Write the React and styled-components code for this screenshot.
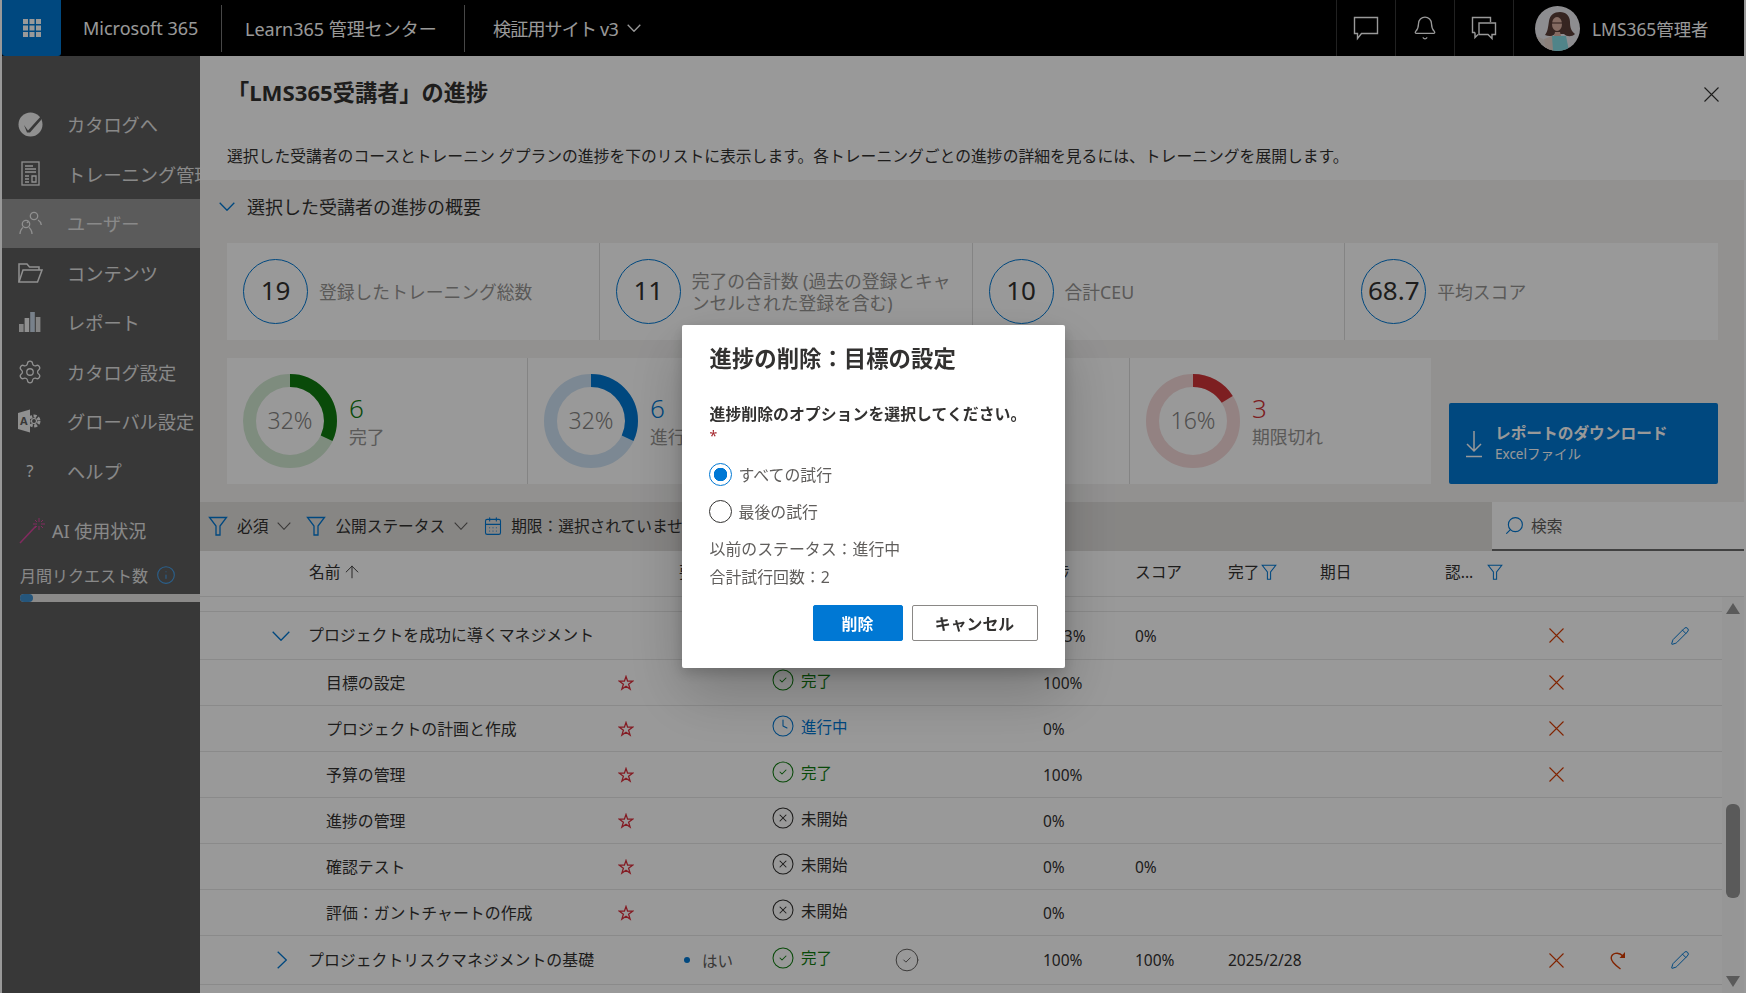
import React from 'react';
import styled, { createGlobalStyle } from 'styled-components';
import { Bell, CalendarDays, Search, Pencil, CircleCheck, Clock, CircleX, Settings, Info, ArrowUp } from 'lucide-react';

const GlobalStyle = createGlobalStyle`
  html, body {
    margin: 0;
    padding: 0;
    height: 100%;
    overflow: hidden;
    background: #fff;
    font-family: "Noto Sans", "Noto Sans CJK JP", sans-serif;
    color: #333;
  }
  * { box-sizing: border-box; }
`;

const AppFrame = styled.div`
  width: 1742px;
  height: 993px;
  margin: 0 2px;
  display: flex;
  flex-direction: column;
  overflow: hidden;
`;

/* top bar */
const TopBar = styled.header`
  height: 56px;
  flex: none;
  display: flex;
  align-items: stretch;
  background: #000;
  color: #fff;
  font-size: 18px;
`;

const Waffle = styled.div`
  width: 59px;
  background: #0078d4;
  border-radius: 0 0 3px 3px;
  display: flex;
  align-items: center;
  justify-content: center;
`;

const TopSection = styled.div`
  display: flex;
  align-items: center;
  align-self: center;
  gap: ${p => p.$gap || 0}px;
  height: 47px;
  width: ${p => p.$width}px;
  padding-left: ${p => p.$pad}px;
  border-right: ${p => (p.$plain ? 'none' : '1px solid #777')};
  white-space: nowrap;
`;

const SiteName = styled.span`
  letter-spacing: -0.8px;
`;

const TopRight = styled.div`
  margin-left: auto;
  display: flex;
  align-items: stretch;
`;

const TopIcon = styled.div`
  width: 59px;
  border-left: 1px solid #383838;
  display: flex;
  align-items: center;
  justify-content: center;
`;

const Profile = styled.div`
  width: 231px;
  border-left: 1px solid #383838;
  padding-left: 21px;
  display: flex;
  align-items: center;
  gap: 12px;
  font-size: 17.4px;
`;

const Body = styled.div`
  flex: 1;
  display: flex;
  min-height: 0;
`;

/* left nav */
const Sidebar = styled.nav`
  width: 198px;
  flex: none;
  background: #5e5e5e;
  overflow: hidden;
  padding-top: 43.5px;
  color: #e4e4e4;
`;

const NavItem = styled.div`
  height: 49.5px;
  display: flex;
  align-items: center;
  white-space: nowrap;
  font-size: 18.2px;
  background: ${p => (p.$active ? '#989898' : 'transparent')};
`;

const NavIcon = styled.span`
  width: 65px;
  flex: none;
  display: flex;
  justify-content: center;
  padding-right: 9px;
  color: #f0f0f0;
  font-size: 16px;
`;

const AiRow = styled.div`
  margin-top: 21px;
  padding-left: 16px;
  height: 26px;
  display: flex;
  align-items: center;
  gap: 6px;
  font-size: 18px;
  white-space: nowrap;
`;

const QuotaLabel = styled.div`
  margin-top: 21px;
  padding-left: 18px;
  height: 22px;
  display: flex;
  align-items: center;
  gap: 8px;
  font-size: 16px;
  white-space: nowrap;
`;

const QuotaTrack = styled.div`
  margin: 8px 0 0 18px;
  height: 8px;
  width: 200px;
  background: #e8e6e4;
  border-radius: 4px 0 0 4px;
`;

const QuotaFill = styled.div`
  height: 100%;
  background: #3f8fcf;
  border-radius: 4px;
`;

/* main panel */
const Panel = styled.main`
  flex: 1;
  min-width: 0;
  display: flex;
  flex-direction: column;
  background: #fff;
`;

const PanelHead = styled.div`
  height: 124px;
  flex: none;
  padding: 22px 0 0 27px;
  position: relative;
`;

const PanelTitle = styled.h1`
  margin: 0;
  font-size: 22.2px;
  line-height: 30px;
  font-weight: 700;
  color: #323130;
`;

const PanelDesc = styled.p`
  margin: 37px 0 0;
  font-size: 15.8px;
  line-height: 22px;
  color: #323130;
  white-space: nowrap;
`;

const CloseBtn = styled.span`
  position: absolute;
  top: 31px;
  right: 25px;
  display: flex;
  color: #323130;
`;

const Summary = styled.section`
  flex: none;
  height: 322px;
  background: #f3f2f1;
  padding: 15px 26px 0 27px;
`;

const SummaryHead = styled.div`
  height: 22px;
  display: flex;
  align-items: center;
  gap: 12px;
  margin-left: -8px;
  font-size: 18px;
  color: #323130;
`;

const StatRow = styled.div`
  margin-top: 26px;
  height: 97px;
  display: grid;
  grid-template-columns: repeat(4, 1fr);
  background: #fff;
`;

const StatCard = styled.div`
  display: flex;
  align-items: center;
  gap: 11px;
  padding-left: 16px;
  border-left: ${p => (p.$first ? 'none' : '1px solid #dcdcdc')};
  margin-left: ${p => (p.$first ? 0 : -1)}px;
`;

const StatCircle = styled.div`
  width: 65px;
  height: 65px;
  flex: none;
  border-radius: 50%;
  border: 1px solid #0078d4;
  display: flex;
  align-items: center;
  justify-content: center;
  padding-bottom: 4px;
  font-size: 26px;
  color: #323130;
`;

const StatLabel = styled.div`
  font-size: 17.8px;
  line-height: 22px;
  color: #979593;
  width: 268px;
`;

const DonutRow = styled.div`
  margin-top: 18px;
  display: flex;
  gap: 18px;
  align-items: flex-end;
`;

const DonutCards = styled.div`
  width: 1204px;
  height: 126px;
  flex: none;
  display: grid;
  grid-template-columns: repeat(4, 1fr);
  background: #fff;
`;

const DonutCard = styled.div`
  display: flex;
  align-items: center;
  gap: 12px;
  padding-left: 16px;
  border-left: ${p => (p.$first ? 'none' : '1px solid #dcdcdc')};
  margin-left: ${p => (p.$first ? 0 : -1)}px;
`;

const DonutLabelText = styled.text`
  font-size: 23px;
  fill: #868482;
  text-anchor: middle;
  font-family: "Noto Sans", sans-serif;
  font-weight: 300;
`;

const DonutCount = styled.div`
  font-size: 26px;
  line-height: 32px;
  font-weight: 300;
  color: ${p => p.$color};
`;

const DonutName = styled.div`
  font-size: 17.8px;
  line-height: 26px;
  color: #979593;
`;

const DownloadBtn = styled.div`
  flex: 1;
  height: 81px;
  background: #0078d4;
  border-radius: 2px;
  color: #fff;
  display: flex;
  align-items: center;
  padding-left: 15px;
  gap: 11px;
`;

const DownloadText = styled.div`
  padding-bottom: 4px;
`;

const DownloadTitle = styled.div`
  font-size: 15.7px;
  font-weight: 700;
  line-height: 24px;
`;

const DownloadSub = styled.div`
  font-size: 13.5px;
  line-height: 18px;
`;

/* filter bar */
const FilterBar = styled.div`
  flex: none;
  height: 49px;
  background: #e1dfdd;
  display: flex;
  align-items: center;
  gap: 15px;
  padding-left: 8px;
  padding-bottom: 2px;
  font-size: 15.7px;
  color: #323130;
  white-space: nowrap;
  position: relative;
`;

const FilterItem = styled.div`
  display: flex;
  align-items: center;
  gap: ${p => p.$gap || 9}px;
`;

const SearchBox = styled.div`
  position: absolute;
  right: 0;
  top: 0;
  bottom: 0;
  width: 252px;
  background: #fff;
  border-bottom: 2px solid #6d6d6d;
  display: flex;
  align-items: center;
  gap: 6px;
  padding-left: 12px;
  color: #605e5c;
`;

const MirrorIcon = styled.span`
  display: flex;
  transform: scaleX(-1);
  color: #0078d4;
`;

/* table */
const COLUMNS = '109px 370px 95px 120px 149px 92px 93px 92px 125px 95px 61px 63px 1fr';

const HeaderRow = styled.div`
  flex: none;
  height: 46px;
  display: grid;
  grid-template-columns: ${COLUMNS};
  align-items: center;
  font-size: 15.7px;
  color: #323130;
  border-bottom: 1px solid #e6e6e6;
  white-space: nowrap;
  padding-bottom: 4px;
`;

const HeadCell = styled.div`
  grid-column: ${p => p.$col};
  display: flex;
  align-items: center;
  gap: ${p => p.$gap || 2}px;
  margin-left: ${p => p.$shift || 0}px;
`;

const TableWrap = styled.div`
  flex: 1;
  min-height: 0;
  display: flex;
  overflow: hidden;
`;

const Rows = styled.div`
  flex: 1;
  min-width: 0;
`;

const Spacer = styled.div`
  height: 15px;
  border-bottom: 1px solid #e6e6e6;
`;

const Row = styled.div`
  height: ${p => p.$height}px;
  display: grid;
  grid-template-columns: ${COLUMNS};
  align-items: center;
  border-bottom: 1px solid #e6e6e6;
  font-size: 15.5px;
  color: #323130;
  white-space: nowrap;
`;

const Expander = styled.div`
  grid-column: 1;
  display: flex;
  justify-content: flex-end;
  padding-right: ${p => p.$pad || 19}px;
  color: #0078d4;
`;

const NameCell = styled.div`
  grid-column: 2;
  display: flex;
  align-items: center;
  margin-left: -1px;
  padding-left: ${p => (p.$child ? 18 : 0)}px;
  padding-bottom: ${p => (p.$child ? 0 : 2)}px;
`;

const NameText = styled.span`
  width: ${p => (p.$child ? '292px' : 'auto')};
  font-size: 15.9px;
`;

const RequiredCell = styled.div`
  grid-column: 3;
  display: flex;
  align-items: center;
  gap: 12px;
  padding-left: 5px;
  color: #605e5c;
`;

const Dot = styled.span`
  width: 6px;
  height: 6px;
  border-radius: 50%;
  background: #0078d4;
`;

const StatusCell = styled.div`
  grid-column: 4;
  display: flex;
  align-items: center;
  gap: 6px;
  margin-left: -3px;
  padding-bottom: 5px;
  color: ${p => p.$color};
`;

const VerifyCell = styled.div`
  grid-column: 5;
  display: flex;
  padding-bottom: 1px;
  color: #605e5c;
`;

const PctCell = styled.div`
  grid-column: 6;
  padding-left: ${p => p.$pad || 0}px;
`;

const TextCell = styled.div`
  grid-column: ${p => p.$col};
`;

const ActionCell = styled.div`
  grid-column: ${p => p.$col};
  display: flex;
  padding-left: ${p => p.$pad || 9}px;
  color: ${p => p.$color};
`;

const ScrollRail = styled.div`
  width: 22px;
  flex: none;
  display: flex;
  flex-direction: column;
  align-items: center;
  padding: 6px 0 0 0;
  background: #fafafa;
`;

const ScrollArrow = styled.span`
  width: 0;
  height: 0;
  border-left: 7px solid transparent;
  border-right: 7px solid transparent;
  border-bottom: ${p => (p.$down ? '0' : '11px solid #969696')};
  border-top: ${p => (p.$down ? '11px solid #969696' : '0')};
`;

const ScrollThumb = styled.div`
  width: 14px;
  height: 94px;
  margin: 190px 0 78px;
  border-radius: 6px;
  background: #969696;
`;

/* modal */
const Overlay = styled.div`
  position: fixed;
  inset: 0;
  background: rgba(0, 0, 0, 0.4);
  display: flex;
  align-items: center;
  justify-content: center;
`;

const Dialog = styled.div`
  width: 383px;
  height: 343px;
  background: #fff;
  border-radius: 2px;
  padding: 19px 27px 27px 28px;
  box-shadow: 0 25px 58px rgba(0, 0, 0, 0.22), 0 5px 14px rgba(0, 0, 0, 0.18);
  color: #323130;
`;

const DialogTitle = styled.h2`
  margin: 0;
  font-size: 22.4px;
  line-height: 30px;
  font-weight: 700;
  white-space: nowrap;
`;

const FieldLabel = styled.div`
  margin-top: 29px;
  font-size: 15.9px;
  line-height: 22px;
  font-weight: 700;
  white-space: nowrap;
`;

const RequiredMark = styled.div`
  height: 16px;
  margin-top: 2px;
  line-height: 18px;
  font-size: 14px;
  color: #a4262c;
`;

const RadioRow = styled.label`
  height: 23px;
  margin-top: ${p => p.$top}px;
  margin-left: -1px;
  display: flex;
  align-items: center;
  gap: 7px;
  font-size: 15.9px;
  color: #605e5c;
`;

const Radio = styled.input`
  appearance: none;
  margin: 0;
  width: 23px;
  height: 23px;
  border-radius: 50%;
  border: 1px solid ${p => (p.checked ? '#0078d4' : '#323130')};
  background: ${p => (p.checked ? 'radial-gradient(circle, #0078d4 0 6.5px, #fff 7px)' : '#fff')};
`;

const InfoLine = styled.div`
  margin-top: ${p => p.$top}px;
  font-size: 15.9px;
  line-height: 22px;
  color: #605e5c;
`;

const DialogActions = styled.div`
  margin-top: 17px;
  display: flex;
  justify-content: flex-end;
  gap: 9px;
`;

const Button = styled.button`
  width: ${p => p.$width}px;
  height: 36px;
  padding: 0;
  border-radius: 2px;
  font: inherit;
  font-size: 15.9px;
  font-weight: 700;
  cursor: pointer;
  color: ${p => (p.$primary ? '#fff' : '#323130')};
  background: ${p => (p.$primary ? '#0078d4' : '#fff')};
  border: 1px solid ${p => (p.$primary ? '#0078d4' : '#8a8886')};
`;

const WaffleIcon = () => (
  <svg width="18" height="18" viewBox="0 0 18 18" fill="#fff">
    {[0, 6.5, 13].map(y => [0, 6.5, 13].map(x => <rect key={`${x}-${y}`} x={x} y={y} width="5" height="5" />))}
  </svg>
);

const ChatIcon = () => (
  <svg width="26" height="26" viewBox="0 0 26 26" fill="none" stroke="#fff" strokeWidth="1.4">
    <path d="M1.500 2.500h23v16H8.500l-4 5v-5h-3z" />
  </svg>
);

const CommentsIcon = () => (
  <svg width="26" height="26" viewBox="0 0 26 26" fill="none" stroke="#fff" strokeWidth="1.4">
    <path d="M4 17.500H1.500v-15h18V7" />
    <path d="M8 8h16.500v11.500H21v4l-4-4H8z" />
    <path d="M4 17.500v5l3-3" />
  </svg>
);

const Avatar = () => (
  <svg width="45" height="45" viewBox="0 0 45 45">
    <defs><clipPath id="av"><circle cx="22.500" cy="22.500" r="22.500" /></clipPath></defs>
    <g clipPath="url(#av)">
      <rect width="45" height="45" fill="#ecebf0" />
      <path d="M0 30c8 2 12 4 16 15H0z" fill="#e4dcd8" />
      <path d="M25 6c-6 0-10 3-11 9-1 6-1 10-4 14 4 2 8 1 10-1h9c3 3 8 3 11 0-4-3-5-7-5-12 0-6-4-10-10-10z" fill="#5a3e38" />
      <ellipse cx="22" cy="18" rx="5" ry="7" fill="#dcb3a3" />
      <path d="M17 17h10" stroke="#4a2f2a" strokeWidth="1.200" />
      <path d="M20 26h5l1 4h-7z" fill="#dcb3a3" />
      <path d="M16 45l1-15h14l3 15z" fill="#86dce4" />
      <path d="M9 33l8-3 1 15H11z" fill="#e8d6cc" />
    </g>
  </svg>
);

const Chevron = ({ width, height = width / 2, dir = 'down', color = 'currentColor', stroke = 1.300 }) => {
  const path = dir === 'down'
    ? `M0.700 0.700L${width / 2} ${height - 0.700}L${width - 0.700} 0.700`
    : `M0.700 0.700L${width - 0.700} ${height / 2}L0.700 ${height - 0.700}`;
  return (
    <svg width={width} height={height} viewBox={`0 0 ${width} ${height}`} fill="none" stroke={color} strokeWidth={stroke}>
      <path d={path} />
    </svg>
  );
};

const CrossIcon = ({ size = 15, color = 'currentColor', stroke = 1.100 }) => (
  <svg width={size} height={size} viewBox={`0 0 ${size} ${size}`} fill="none" stroke={color} strokeWidth={stroke}>
    <path d={`M0.500 0.500L${size - 0.500} ${size - 0.500}M${size - 0.500} 0.500L0.500 ${size - 0.500}`} />
  </svg>
);

const StarIcon = () => (
  <svg width="16" height="16" viewBox="0 0 16 16" fill="none" stroke="#dc2f3c" strokeWidth="1.300">
    <path d="M8 1.500l1.600 4.700h5l-4 3 1.500 4.900L8 11.200l-4.100 2.900 1.500-4.900-4-3h5z" />
  </svg>
);

const CatalogIcon = () => (
  <svg width="25" height="25" viewBox="0 0 25 25">
    <circle cx="12.500" cy="12.500" r="12" fill="#f0f0f0" />
    <path d="M6 13l4 5.500L24 3l-1 5-11 12.500h-3z" fill="#5e5e5e" />
  </svg>
);

const TrainingIcon = () => (
  <svg width="19" height="25" viewBox="0 0 19 25" fill="none" stroke="#f0f0f0" strokeWidth="1.300">
    <rect x="1" y="1" width="17" height="23" />
    <path d="M4 5h8M4 8h11M4 11h11M4 15h4M4 18h4M4 21h4M11 15h4v6h-4z" />
  </svg>
);

const UsersIcon = () => (
  <svg width="24" height="24" viewBox="0 0 24 24" fill="none" stroke="#f0f0f0" strokeWidth="1.300">
    <circle cx="16" cy="5" r="3.700" />
    <path d="M11 10.500c-.5 0-1.500.5-2 1.500M20 9c2 1 3 3 3.300 5" />
    <circle cx="8" cy="13" r="3.700" />
    <path d="M2 23c0-3 2-6 3-6.500M14 23c0-3-2-6-3-6.500" />
  </svg>
);

const FolderIcon = () => (
  <svg width="25" height="22" viewBox="0 0 25 22" fill="none" stroke="#f0f0f0" strokeWidth="1.500">
    <path d="M1 20V2h8l2.500 3H21v3" />
    <path d="M1 20l4-12h19l-4.500 12z" />
  </svg>
);

const ReportIcon = () => (
  <svg width="22" height="22" viewBox="0 0 22 22">
    <rect x="0" y="13" width="4.600" height="8" fill="#dcdcdc" />
    <rect x="5.600" y="7" width="4.600" height="14" fill="#f0f0f0" />
    <rect x="11.200" y="1" width="4.600" height="20" fill="#c8d8e8" />
    <rect x="16.800" y="6" width="4.600" height="15" fill="#dcdcdc" />
  </svg>
);

const GlobalIcon = () => (
  <svg width="26" height="26" viewBox="0 0 26 26">
    <path d="M1 5l12-3.500v23L1 21z" fill="#f0f0f0" />
    <text x="3" y="17" fontSize="11" fontWeight="700" fill="#5e5e5e">A</text>
    <circle cx="17" cy="13" r="5" fill="none" stroke="#f0f0f0" strokeWidth="3" strokeDasharray="3 1.500" />
    <circle cx="17" cy="13" r="2.500" fill="none" stroke="#f0f0f0" strokeWidth="1.200" />
  </svg>
);

const WandIcon = () => (
  <svg width="28" height="28" viewBox="0 0 28 28" fill="none" stroke="#d9479f" strokeWidth="1.300">
    <path d="M2 27L18 10" strokeWidth="1.500" />
    <path d="M21 2v4M21 10v4M15 8h4M23 8h4M17 4l2 2M25 4l-2 2M17 12l2-2M25 12l-2-2" strokeWidth="1" />
  </svg>
);

const FunnelIcon = ({ size = 20 }) => (
  <svg width={size} height={size} viewBox="0 0 20 20" fill="none" stroke="#0078d4" strokeWidth="1.300">
    <path d="M1.500 1.500h17l-6.500 8.500v9h-4v-9z" />
  </svg>
);

const DownloadIcon = () => (
  <svg width="20" height="30" viewBox="0 0 20 30" fill="none" stroke="#fff" strokeWidth="1.500">
    <path d="M10 2v20M3 15l7 7 7-7M2 27.500h16" />
  </svg>
);

const RedoIcon = () => (
  <svg width="16" height="19" viewBox="0 0 16 19" fill="none" stroke="#d83b01" strokeWidth="1.400">
    <path d="M10.500 18C5 14 1 10.500 1.200 7 1.500 2.500 8 0 13 5" />
    <path d="M15 1v6H9.500z" fill="#d83b01" stroke="none" />
  </svg>
);

const Donut = ({ percent, track, color, label }) => {
  const r = 40.5;
  const c = 2 * Math.PI * r;
  return (
    <svg width="94" height="94" viewBox="0 0 94 94">
      <circle cx="47" cy="47" r={r} fill="none" stroke={track} strokeWidth="13" />
      <circle
        cx="47"
        cy="47"
        r={r}
        fill="none"
        stroke={color}
        strokeWidth="13"
        strokeDasharray={`${(c * percent) / 100} ${c}`}
        transform="rotate(-90 47 47)"
      />
      <DonutLabelText x="47" y="55">{label}</DonutLabelText>
    </svg>
  );
};

const stats = [
  { value: '19', label: '登録したトレーニング総数' },
  { value: '11', label: '完了の合計数 (過去の登録とキャンセルされた登録を含む)' },
  { value: '10', label: '合計CEU' },
  { value: '68.7', label: '平均スコア' },
];

const donuts = [
  { percent: 32, label: '32%', count: 6, name: '完了', color: '#107c10', track: '#d3e9d3' },
  { percent: 32, label: '32%', count: 6, name: '進行中', color: '#0078d4', track: '#cfe3f5' },
  { percent: 21, label: '21%', count: 4, name: '未開始', color: '#605e5c', track: '#e1dfdd' },
  { percent: 16, label: '16%', count: 3, name: '期限切れ', color: '#d13438', track: '#f5d9d9' },
];

const nav = [
  { label: 'カタログへ', icon: <CatalogIcon /> },
  { label: 'トレーニング管理', icon: <TrainingIcon /> },
  { label: 'ユーザー', icon: <UsersIcon />, active: true },
  { label: 'コンテンツ', icon: <FolderIcon /> },
  { label: 'レポート', icon: <ReportIcon /> },
  { label: 'カタログ設定', icon: <Settings size={26} strokeWidth={1.2} /> },
  { label: 'グローバル設定', icon: <GlobalIcon /> },
  { label: 'ヘルプ', icon: '?' },
];

const DONE = { text: '完了', color: '#107c10', Icon: CircleCheck };
const PROGRESS = { text: '進行中', color: '#0078d4', Icon: Clock };
const TODO = { text: '未開始', color: '#323130', Icon: CircleX };

const lessons = [
  { name: '目標の設定', status: DONE, pct: '100%', canReset: true },
  { name: 'プロジェクトの計画と作成', status: PROGRESS, pct: '0%', canReset: true },
  { name: '予算の管理', status: DONE, pct: '100%', canReset: true },
  { name: '進捗の管理', status: TODO, pct: '0%' },
  { name: '確認テスト', status: TODO, pct: '0%', score: '0%' },
  { name: '評価：ガントチャートの作成', status: TODO, pct: '0%' },
];

const Status = ({ status }) => (
  <StatusCell $color={status.color}>
    <status.Icon size={24} strokeWidth={1.05} />
    {status.text}
  </StatusCell>
);

const App = () => (
  <>
    <GlobalStyle />
    <AppFrame>
      <TopBar>
        <Waffle><WaffleIcon /></Waffle>
        <TopSection $width={161} $pad={22}>Microsoft 365</TopSection>
        <TopSection $width={243} $pad={23}>Learn365 管理センター</TopSection>
        <TopSection $plain $width={200} $pad={28} $gap={9}>
          <SiteName>検証用サイト v3</SiteName>
          <Chevron width={14} height={8} />
        </TopSection>
        <TopRight>
          <TopIcon><ChatIcon /></TopIcon>
          <TopIcon><Bell size={26} strokeWidth={1.2} /></TopIcon>
          <TopIcon><CommentsIcon /></TopIcon>
          <Profile>
            <Avatar />
            LMS365管理者
          </Profile>
        </TopRight>
      </TopBar>

      <Body>
        <Sidebar>
          {nav.map(item => (
            <NavItem key={item.label} $active={item.active}>
              <NavIcon>{item.icon}</NavIcon>
              {item.label}
            </NavItem>
          ))}
          <AiRow>
            <WandIcon />
            AI 使用状況
          </AiRow>
          <QuotaLabel>
            月間リクエスト数
            <Info size={20} strokeWidth={1.3} color="#46a0ea" />
          </QuotaLabel>
          <QuotaTrack>
            <QuotaFill style={{ width: `${(13 / 200) * 100}%` }} />
          </QuotaTrack>
        </Sidebar>

        <Panel>
          <PanelHead>
            <PanelTitle>「LMS365受講者」の進捗</PanelTitle>
            <PanelDesc>選択した受講者のコースとトレーニン グプランの進捗を下のリストに表示します。各トレーニングごとの進捗の詳細を見るには、トレーニングを展開します。</PanelDesc>
            <CloseBtn><CrossIcon size={15} stroke={1.1} /></CloseBtn>
          </PanelHead>

          <Summary>
            <SummaryHead>
              <Chevron width={16} height={9} color="#0078d4" />
              選択した受講者の進捗の概要
            </SummaryHead>
            <StatRow>
              {stats.map((s, i) => (
                <StatCard key={s.value} $first={i === 0}>
                  <StatCircle>{s.value}</StatCircle>
                  <StatLabel>{s.label}</StatLabel>
                </StatCard>
              ))}
            </StatRow>
            <DonutRow>
              <DonutCards>
                {donuts.map((d, i) => (
                  <DonutCard key={d.name} $first={i === 0}>
                    <Donut percent={d.percent} track={d.track} color={d.color} label={d.label} />
                    <div>
                      <DonutCount $color={d.color}>{d.count}</DonutCount>
                      <DonutName>{d.name}</DonutName>
                    </div>
                  </DonutCard>
                ))}
              </DonutCards>
              <DownloadBtn>
                <DownloadIcon />
                <DownloadText>
                  <DownloadTitle>レポートのダウンロード</DownloadTitle>
                  <DownloadSub>Excelファイル</DownloadSub>
                </DownloadText>
              </DownloadBtn>
            </DonutRow>
          </Summary>

          <FilterBar>
            <FilterItem>
              <FunnelIcon />
              必須
              <Chevron width={14} height={8} stroke={1.1} color="#605e5c" />
            </FilterItem>
            <FilterItem>
              <FunnelIcon />
              公開ステータス
              <Chevron width={14} height={8} stroke={1.1} color="#605e5c" />
            </FilterItem>
            <FilterItem $gap={8}>
              <CalendarDays size={20} strokeWidth={1.3} color="#0078d4" />
              期限：選択されていません
            </FilterItem>
            <SearchBox>
              <MirrorIcon><Search size={21} strokeWidth={1.3} /></MirrorIcon>
              検索
            </SearchBox>
          </FilterBar>

          <HeaderRow>
            <HeadCell $col={2}>名前 <ArrowUp size={20} strokeWidth={1.1} /></HeadCell>
            <HeadCell $col={3}>要件</HeadCell>
            <HeadCell $col={4}>ステータス</HeadCell>
            <HeadCell $col={6} $shift={-5}>進捗</HeadCell>
            <HeadCell $col={7}>スコア</HeadCell>
            <HeadCell $col={8}>完了 <FunnelIcon size={16} /></HeadCell>
            <HeadCell $col={9}>期日</HeadCell>
            <HeadCell $col={10} $gap={14}>認... <FunnelIcon size={16} /></HeadCell>
          </HeaderRow>

          <TableWrap>
            <Rows>
              <Spacer />
              <Row $height={48}>
                <Expander><Chevron width={18} height={10} /></Expander>
                <NameCell><NameText>プロジェクトを成功に導くマネジメント</NameText></NameCell>
                <PctCell $pad={12}>33%</PctCell>
                <TextCell $col={7}>0%</TextCell>
                <ActionCell $col={11} $color="#d83b01"><CrossIcon /></ActionCell>
                <ActionCell $col={13} $pad={6} $color="#0078d4"><Pencil size={20} strokeWidth={1.2} /></ActionCell>
              </Row>
              {lessons.map(l => (
                <Row key={l.name} $height={46}>
                  <NameCell $child>
                    <NameText $child><span>{l.name}</span></NameText>
                    <StarIcon />
                  </NameCell>
                  <Status status={l.status} />
                  <PctCell>{l.pct}</PctCell>
                  {l.score && <TextCell $col={7}>{l.score}</TextCell>}
                  {l.canReset && (
                    <ActionCell $col={11} $color="#d83b01"><CrossIcon /></ActionCell>
                  )}
                </Row>
              ))}
              <Row $height={49}>
                <Expander $pad={22}><Chevron width={10} height={18} dir="right" /></Expander>
                <NameCell><NameText>プロジェクトリスクマネジメントの基礎</NameText></NameCell>
                <RequiredCell><Dot />はい</RequiredCell>
                <Status status={DONE} />
                <VerifyCell><CircleCheck size={26} strokeWidth={0.9} /></VerifyCell>
                <PctCell>100%</PctCell>
                <TextCell $col={7}>100%</TextCell>
                <TextCell $col={8}>2025/2/28</TextCell>
                <ActionCell $col={11} $color="#d83b01"><CrossIcon /></ActionCell>
                <ActionCell $col={12} $color="#d83b01"><RedoIcon /></ActionCell>
                <ActionCell $col={13} $pad={6} $color="#0078d4"><Pencil size={20} strokeWidth={1.2} /></ActionCell>
              </Row>
            </Rows>
            <ScrollRail>
              <ScrollArrow />
              <ScrollThumb />
              <ScrollArrow $down />
            </ScrollRail>
          </TableWrap>
        </Panel>
      </Body>
    </AppFrame>

    <Overlay>
      <Dialog>
        <DialogTitle>進捗の削除：目標の設定</DialogTitle>
        <FieldLabel>進捗削除のオプションを選択してください。</FieldLabel>
        <RequiredMark>*</RequiredMark>
        <RadioRow $top={20}>
          <Radio type="radio" name="attempt" checked readOnly />
          すべての試行
        </RadioRow>
        <RadioRow $top={14}>
          <Radio type="radio" name="attempt" checked={false} readOnly />
          最後の試行
        </RadioRow>
        <InfoLine $top={15}>以前のステータス：進行中</InfoLine>
        <InfoLine $top={6}>合計試行回数：2</InfoLine>
        <DialogActions>
          <Button $primary $width={90}>削除</Button>
          <Button $width={126}>キャンセル</Button>
        </DialogActions>
      </Dialog>
    </Overlay>
  </>
);

export default App;
